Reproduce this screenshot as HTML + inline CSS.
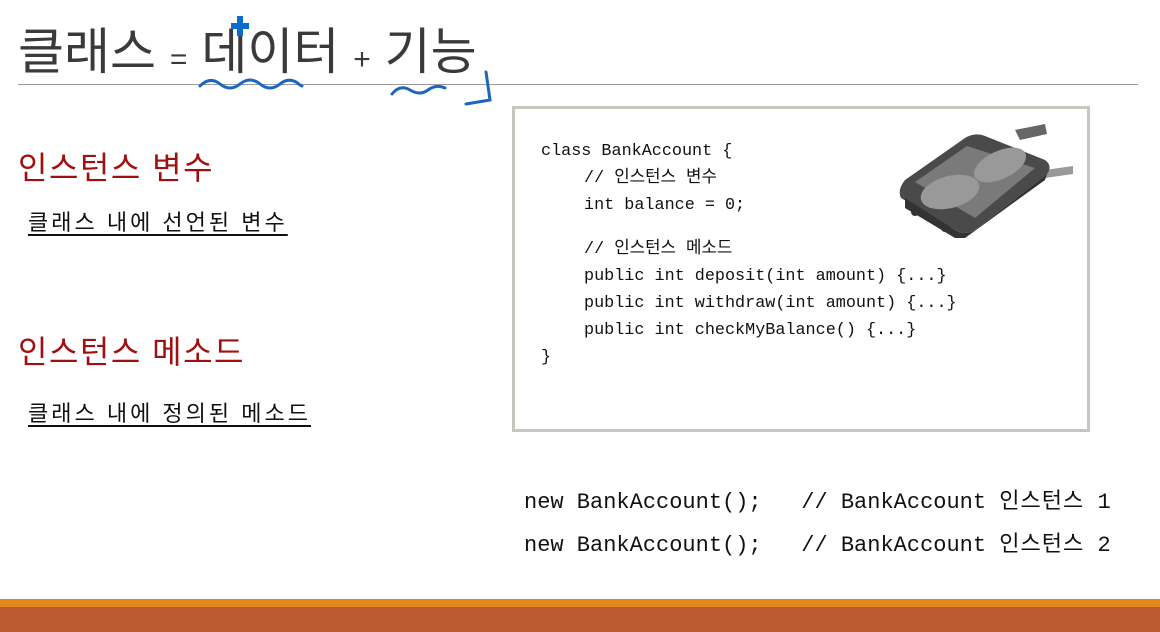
<!DOCTYPE html>
<html><head><meta charset="utf-8"><style>
body{margin:0;width:1160px;height:632px;background:#fff;position:relative;overflow:hidden;font-family:"Liberation Sans","Noto Sans CJK KR",sans-serif}
.a{position:absolute;white-space:nowrap}
.title{left:18px;top:12px;font-size:50px;color:#3a3a3a;letter-spacing:0px}
.hr{left:18px;top:84px;width:1120px;height:1px;background:#9a9a9a}
.red{color:#a01010;font-size:32px;letter-spacing:1.5px}
.ul{font-size:22px;color:#111;text-decoration:underline;text-underline-offset:4px;letter-spacing:3px}
.box{left:512px;top:106px;width:572px;height:320px;border:3px solid #c4c9bf}
.c{position:absolute;white-space:pre;font-family:"Liberation Mono","Noto Sans CJK KR",monospace;font-size:16.8px;line-height:20px;color:#111}
.code2{font-family:"Liberation Mono","Noto Sans CJK KR",monospace;font-size:22px;color:#111}
.k{letter-spacing:1px}
</style></head><body>
<div class="a title">클래스 <span style="font-size:30px">=</span> 데이터 <span style="font-size:30px">+</span> 기능</div>
<div class="a hr"></div>
<svg class="a" style="left:0;top:0" width="520" height="110">
<path d="M200 86 Q210 76 220 84 T240 84 T260 84 T280 84 T300 85 L302 86" fill="none" stroke="#1a66c0" stroke-width="3" stroke-linecap="round"/>
<path d="M392 94 Q400 84 410 90 T428 90 T445 88" fill="none" stroke="#1a66c0" stroke-width="3" stroke-linecap="round"/>
<path d="M486 72 L490 100 L466 104" fill="none" stroke="#1a66c0" stroke-width="3" stroke-linecap="round"/>
<rect x="237" y="16" width="6" height="20" fill="#0a6ccc"/><rect x="231" y="23" width="18" height="6" fill="#0a6ccc"/>
</svg>
<div class="a red" style="left:18px;top:143px">인스턴스 변수</div>
<div class="a ul" style="left:28px;top:205px">클래스 내에 선언된 변수</div>
<div class="a red" style="left:18px;top:327px">인스턴스 메소드</div>
<div class="a ul" style="left:28px;top:396px">클래스 내에 정의된 메소드</div>
<div class="a box"></div>
<div class="c" style="left:541px;top:142px">class BankAccount {</div>
<div class="c" style="left:584px;top:169px">// 인스턴스 변수</div>
<div class="c" style="left:584px;top:196px">int balance = 0;</div>
<div class="c" style="left:584px;top:240px">// 인스턴스 메소드</div>
<div class="c" style="left:584px;top:267px">public int deposit(int amount) {...}</div>
<div class="c" style="left:584px;top:294px">public int withdraw(int amount) {...}</div>
<div class="c" style="left:584px;top:321px">public int checkMyBalance() {...}</div>
<div class="c" style="left:541px;top:348px">}</div>
<svg class="a" style="left:895px;top:120px" width="185" height="125">
<path d="M120 10 L150 4 L152 14 L125 20Z" fill="#666"/>
<path d="M150 50 L178 46 L178 54 L150 58Z" fill="#999"/>
<path d="M10 60 L70 18 Q80 12 90 16 L150 40 Q158 46 152 54 L80 110 Q70 116 60 110 L6 78 Q2 70 10 60Z" fill="#4a4a4a"/>
<path d="M20 62 L72 26 L140 48 L80 98 Z" fill="#7a7a7a"/>
<ellipse cx="55" cy="72" rx="30" ry="16" fill="#999" transform="rotate(-15 55 72)"/>
<ellipse cx="105" cy="45" rx="28" ry="14" fill="#999" transform="rotate(-25 105 45)"/>
<path d="M10 78 L10 88 L60 118 L70 118 L150 60 L152 54 L80 110 Q70 116 60 110Z" fill="#333"/>
<circle cx="20" cy="92" r="4" fill="#333"/><circle cx="50" cy="108" r="4" fill="#333"/>
</svg>
<div class="a code2" style="left:524px;top:483px">new BankAccount();&nbsp;&nbsp;&nbsp;// BankAccount <span class="k">인스턴스</span> 1</div>
<div class="a code2" style="left:524px;top:526px">new BankAccount();&nbsp;&nbsp;&nbsp;// BankAccount <span class="k">인스턴스</span> 2</div>
<div class="a" style="left:0;top:599px;width:1160px;height:8px;background:#e08a1e"></div>
<div class="a" style="left:0;top:607px;width:1160px;height:25px;background:#bb5a2f"></div>
</body></html>
